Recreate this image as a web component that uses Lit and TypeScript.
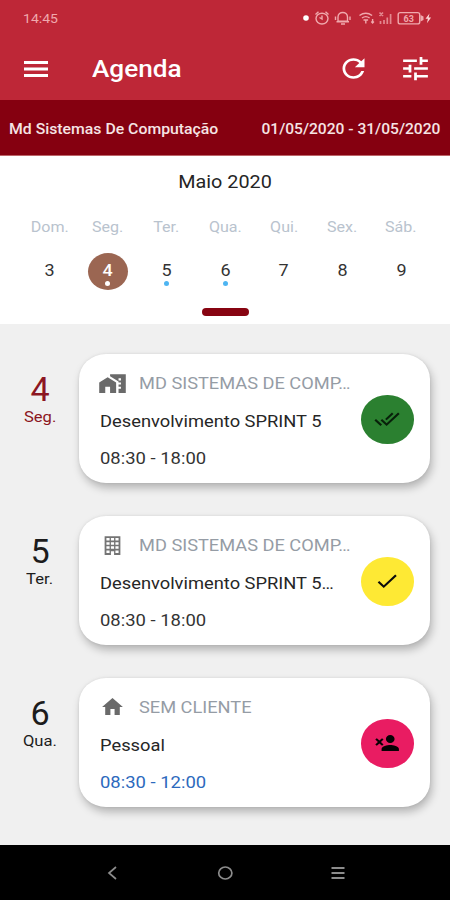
import { LitElement, html, svg, css } from "lit";
import { customElement, property } from "lit/decorators.js";

const PATHS: Record<string, string> = {
  menu: "M3 18h18v-2.3H3V18zm0-4.85h18v-2.3H3v2.3zM3 6v2.3h18V6H3z",
  refresh:
    "M17.65 6.35C16.2 4.9 14.21 4 12 4c-4.42 0-7.99 3.58-7.99 8s3.57 8 7.99 8c3.73 0 6.84-2.55 7.73-6h-2.08c-.82 2.33-3.04 4-5.65 4-3.31 0-6-2.69-6-6s2.69-6 6-6c1.66 0 3.14.69 4.22 1.78L13 11h7V4l-2.35 2.35z",
  tune: "M3 17v2h6v-2H3zM3 5v2h10V5H3zm10 16v-2h8v-2h-8v-2h-2v6h2zM7 9v2H3v2h4v2h2V9H7zm14 4v-2H11v2h10zm-6-4h2V7h4V5h-4V3h-2v6z",
  homework:
    "M1 11v10h5v-6h4v6h5V11L8 6l-7 5zM10 3v1.97l7 5V11h2v2h-2v2h2v2h-2v4h6V3H10zm9 6h-2V7h2v2z",
  building:
    "M5 3V21H10.6V17.5H13.4V21H19V3H5M6.6 4.8H9.4V7.2H6.600V4.800M10.600 4.800H13.400V7.200H10.600V4.800M14.600 4.800H17.400V7.200H14.600V4.800M6.600 8.800H9.400V11.200H6.600V8.800M10.600 8.800H13.400V11.200H10.600V8.800M14.600 8.800H17.400V11.200H14.600V8.800M6.600 12.800H9.400V15.200H6.600V12.800M10.600 12.800H13.400V15.200H10.600V12.800M14.600 12.800H17.400V15.200H14.600V12.800M6.600 16.800H9.400V19.200H6.600V16.800M14.600 16.800H17.400V19.200H14.600V16.800Z",
  home: "M10 20v-6h4v6h5v-8h3L12 3 2 12h3v8z",
  doneAll:
    "M18 7l-1.41-1.41-6.34 6.34 1.41 1.41L18 7zm4.24-1.41L11.66 16.17 7.48 12l-1.41 1.41L11.66 19l12-12-1.42-1.41zM.41 13.41L6 19l1.41-1.41L1.83 12 .41 13.41z",
  done: "M9 16.17L4.83 12l-1.42 1.41L9 19 21 7l-1.41-1.41z",
  personRemove:
    "M15 12c2.21 0 4-1.79 4-4s-1.79-4-4-4-4 1.79-4 4 1.79 4 4 4zm0 2c-2.67 0-8 1.34-8 4v2h16v-2c0-2.66-5.33-4-8-4zM5 9.59L2.6 7.2 1.2 8.6 3.59 11 1.2 13.4l1.4 1.4L5 12.41l2.4 2.39 1.4-1.4L6.41 11 8.8 8.6 7.4 7.2z",
};

const icon = (name: string, cls: string) => html`
  <svg class=${cls} viewBox="0 0 24 24" preserveAspectRatio="none" fill="currentColor">
    ${svg`<path fill-rule="evenodd" d=${PATHS[name]}></path>`}
  </svg>
`;

interface Entry {
  day: string;
  weekday: string;
  today?: boolean;
  icon: string;
  client: string;
  title: string;
  time: string;
  timeLink?: boolean;
  status: string;
  tone: string;
}

const ENTRIES: Entry[] = [
  { day: "4", weekday: "Seg.", today: true, icon: "homework", client: "MD SISTEMAS DE COMP…", title: "Desenvolvimento SPRINT 5", time: "08:30 - 18:00", status: "doneAll", tone: "green" },
  { day: "5", weekday: "Ter.", icon: "building", client: "MD SISTEMAS DE COMP…", title: "Desenvolvimento SPRINT 5…", time: "08:30 - 18:00", status: "done", tone: "yellow" },
  { day: "6", weekday: "Qua.", icon: "home", client: "SEM CLIENTE", title: "Pessoal", time: "08:30 - 12:00", timeLink: true, status: "personRemove", tone: "pink" },
];

const WEEK = [
  { name: "Dom.", num: "3" },
  { name: "Seg.", num: "4", selected: true, dot: true },
  { name: "Ter.", num: "5", dot: true },
  { name: "Qua.", num: "6", dot: true },
  { name: "Qui.", num: "7" },
  { name: "Sex.", num: "8" },
  { name: "Sáb.", num: "9" },
];

@customElement("status-bar")
export class StatusBar extends LitElement {
  static styles = css`
    :host { display: flex; justify-content: space-between; height: 36px; padding: 0 17px 0 23px; color: #f0a9ad; }
    .clock { font-size: 13px; line-height: 37px; transform: scaleX(1.08); transform-origin: left; }
    .icons { width: 130px; height: 36px; }
    .pct { font: 700 9px Roboto, sans-serif; }
  `;
  render() {
    return html`
      <span class="clock">14:45</span>
      <svg class="icons" viewBox="303 0 130 36" fill="none" stroke="currentColor" stroke-width="1.4">
        <circle cx="306" cy="18" r="2.8" fill="#fff" stroke="none"></circle>
        <ellipse cx="322" cy="18.6" rx="6" ry="5.4"></ellipse>
        <path d="M322 15.500v3.500l-2.500-1.500M315.500 14.500l3-2.800M328.500 14.500l-3-2.800"></path>
        <path d="M338 21.300v-4.300c0-6 9.500-6 9.500 0v4.300zM336.500 21.800h12.500M341 24h4M335.500 16.500v3.500M350 16.500v3.500"></path>
        <path d="M359.500 15.500q6.300-4.600 12.600 0M362 18q3.800-2.800 7.600 0M365.800 23.500v-4M363.500 20h4.600M372.600 19v4M371.300 21.500l1.300 1.500 1.300-1.500"></path>
        <path d="M379.500 12.500l3.500 3.500M383 12.500l-3.500 3.500M380.500 24v-3M384 24v-4M387.300 24v-6.500M390.600 24v-10" stroke-width="1.700" opacity=".75"></path>
        <rect x="398.200" y="12.600" width="21.500" height="11.300" rx="2"></rect>
        <path d="M420.500 15v6.500l3-1.500v-3.500z" fill="currentColor" stroke="none"></path>
        <text class="pct" x="403.500" y="21.500" fill="currentColor" stroke="none">63</text>
        <path d="M429.500 13.500l-4 5.300h2.400l-1 4.500 4.200-5.800h-2.500z" fill="#fbd5d6" stroke="none"></path>
      </svg>
    `;
  }
}

@customElement("week-calendar")
export class WeekCalendar extends LitElement {
  static styles = css`
    :host { display: flex; flex-direction: column; height: 169px; background: #fff; box-sizing: border-box; border-top: 1px solid #bd6468; }
    .month { margin-top: 13px; height: 26px; line-height: 26px; text-align: center; font-size: 18px; color: #252525; transform: scaleX(1.1); }
    .days { display: grid; grid-template-columns: repeat(7, 1fr); padding: 0 19.500px 0 20px; margin-top: 20px; }
    .day { display: flex; flex-direction: column; align-items: center; }
    .name { font-size: 15px; line-height: 24px; color: #b9c3ce; transform: scaleX(1.07); }
    .num { box-sizing: border-box; width: 40px; height: 37px; margin-top: 14px; padding-top: 7px; border-radius: 50%; display: flex; flex-direction: column; align-items: center; font-size: 16.500px; line-height: 21px; color: #333; }
    .digit { transform: scaleX(1.09); }
    .dot { width: 5px; height: 5px; border-radius: 50%; background: #4eb5f2; }
    .selected { background: #9b6652; color: #fff; }
    .selected .digit { font-weight: 500; }
    .selected .dot { background: #fff; }
    .handle { align-self: center; width: 47px; height: 8px; border-radius: 4px; background: #870411; margin-top: 18px; }
  `;
  render() {
    return html`
      <div class="month">Maio 2020</div>
      <div class="days">
        ${WEEK.map(
          (d) => html`
            <div class="day">
              <span class="name">${d.name}</span>
              <div class="num ${d.selected ? "selected" : ""}">
                <span class="digit">${d.num}</span>
                ${d.dot ? html`<span class="dot"></span>` : ""}
              </div>
            </div>
          `
        )}
      </div>
      <div class="handle"></div>
    `;
  }
}

@customElement("agenda-entry")
export class AgendaEntry extends LitElement {
  @property({ attribute: false }) entry!: Entry;
  static styles = css`
    :host { display: flex; height: 129px; }
    .date { width: 80px; margin-right: -1px; display: flex; flex-direction: column; align-items: center; color: #1c1c1c; padding-top: 18px; box-sizing: border-box; }
    .today { color: #8c1622; }
    .num { font-size: 32.500px; line-height: 36px; transform: scaleX(1.05); }
    .weekday { font-size: 15.500px; line-height: 18px; transform: scaleX(1.07); }
    .card { width: 351px; box-sizing: border-box; height: 129px; padding: 0 16.500px 0 20.500px; background: #fff; border-radius: 27px / 25px; display: flex; align-items: center; box-shadow: 2px 5px 9px rgba(0, 0, 0, 0.25), 0 0 3px rgba(0, 0, 0, 0.08); }
    .body { flex: 1; min-width: 0; height: 129px; box-sizing: border-box; padding-top: 16px; }
    .head { display: flex; align-items: center; height: 26px; }
    .slot { width: 39.500px; flex: none; display: flex; }
    .type { color: #6a6a6a; flex: none; }
    .homework { width: 29px; height: 25px; margin-left: -2px; }
    .building { width: 27px; height: 25px; margin-left: -1px; color: #747474; }
    .home { width: 25px; height: 24px; margin-left: 0.500px; }
    .line { display: block; white-space: nowrap; transform-origin: left; font-size: 17px; }
    .client { color: #959ca5; transform: scaleX(1.072); }
    .title { color: #262626; line-height: 26px; margin-top: 12px; transform: scaleX(1.077); }
    .time { color: #333; line-height: 26px; margin-top: 11px; transform: scaleX(1.085); }
    .link { color: #2c69bd; }
    .status { width: 52.500px; height: 48.500px; margin-top: 1.500px; border-radius: 50%; display: flex; align-items: center; justify-content: center; color: #0c0c0c; flex: none; }
    .green { background: #2b8030; color: #08200a; }
    .yellow { background: #fee934; }
    .pink { background: #e91c62; color: #080204; }
    .mark { width: 26px; height: 24px; }
  `;
  render() {
    const e = this.entry;
    return html`
      <div class="date ${e.today ? "today" : ""}">
        <span class="num">${e.day}</span>
        <span class="weekday">${e.weekday}</span>
      </div>
      <div class="card">
        <div class="body">
          <div class="head">
            <span class="slot">${icon(e.icon, `type ${e.icon}`)}</span>
            <span class="line client">${e.client}</span>
          </div>
          <span class="line title">${e.title}</span>
          <span class="line time ${e.timeLink ? "link" : ""}">${e.time}</span>
        </div>
        <div class="status ${e.tone}">${icon(e.status, "mark")}</div>
      </div>
    `;
  }
}

@customElement("app-root")
export class AppRoot extends LitElement {
  static styles = css`
    :host { display: flex; flex-direction: column; width: 450px; height: 900px; overflow: hidden; background: #f0f0f0; font-family: Roboto, "Liberation Sans", sans-serif; }
    .top { background: #be2737; height: 100px; color: #fff; }
    .bar { display: flex; align-items: center; height: 64px; padding: 1px 18px 0 20px; box-sizing: border-box; }
    .act { width: 33px; height: 31px; }
    .menu { width: 32px; height: 32px; }
    .heading { flex: 1; margin-left: 40px; font-size: 24px; font-weight: 500; transform: scaleX(1.09); transform-origin: left; }
    .refresh { margin-right: 29px; }
    .sub { display: flex; justify-content: space-between; align-items: center; height: 55px; padding: 2px 9.500px 0 9px; box-sizing: border-box; background: #850010; color: #f6e4e4; font-size: 15px; font-weight: 500; white-space: nowrap; }
    .company { transform: scaleX(1.053); transform-origin: left; }
    .range { transform: scaleX(1.038); transform-origin: right; }
    .list { display: flex; flex-direction: column; gap: 33px; padding-top: 30px; height: 521px; box-sizing: border-box; flex: none; }
    .nav { display: flex; justify-content: space-around; align-items: center; height: 55px; padding: 0 56px; background: #000; color: #8c8c8c; }
    .key { width: 18px; height: 18px; fill: none; stroke: currentColor; stroke-width: 1.700; }
  `;
  render() {
    return html`
      <div class="top">
        <status-bar></status-bar>
        <div class="bar">
          ${icon("menu", "menu")}
          <span class="heading">Agenda</span>
          ${icon("refresh", "act refresh")} ${icon("tune", "act")}
        </div>
      </div>
      <div class="sub">
        <span class="company">Md Sistemas De Computação</span>
        <span class="range">01/05/2020 - 31/05/2020</span>
      </div>
      <week-calendar></week-calendar>
      <div class="list">${ENTRIES.map((e) => html`<agenda-entry .entry=${e}></agenda-entry>`)}</div>
      <div class="nav">
        <svg class="key" viewBox="0 0 18 18"><path d="M13 3L6 9l7 6"></path></svg>
        <svg class="key" viewBox="0 0 18 18"><ellipse cx="9.300" cy="9" rx="6.600" ry="6"></ellipse></svg>
        <svg class="key" viewBox="0 0 18 18"><path d="M2.500 4h13M2.500 9h13M2.500 14h13" stroke-width="2"></path></svg>
      </div>
    `;
  }
}
